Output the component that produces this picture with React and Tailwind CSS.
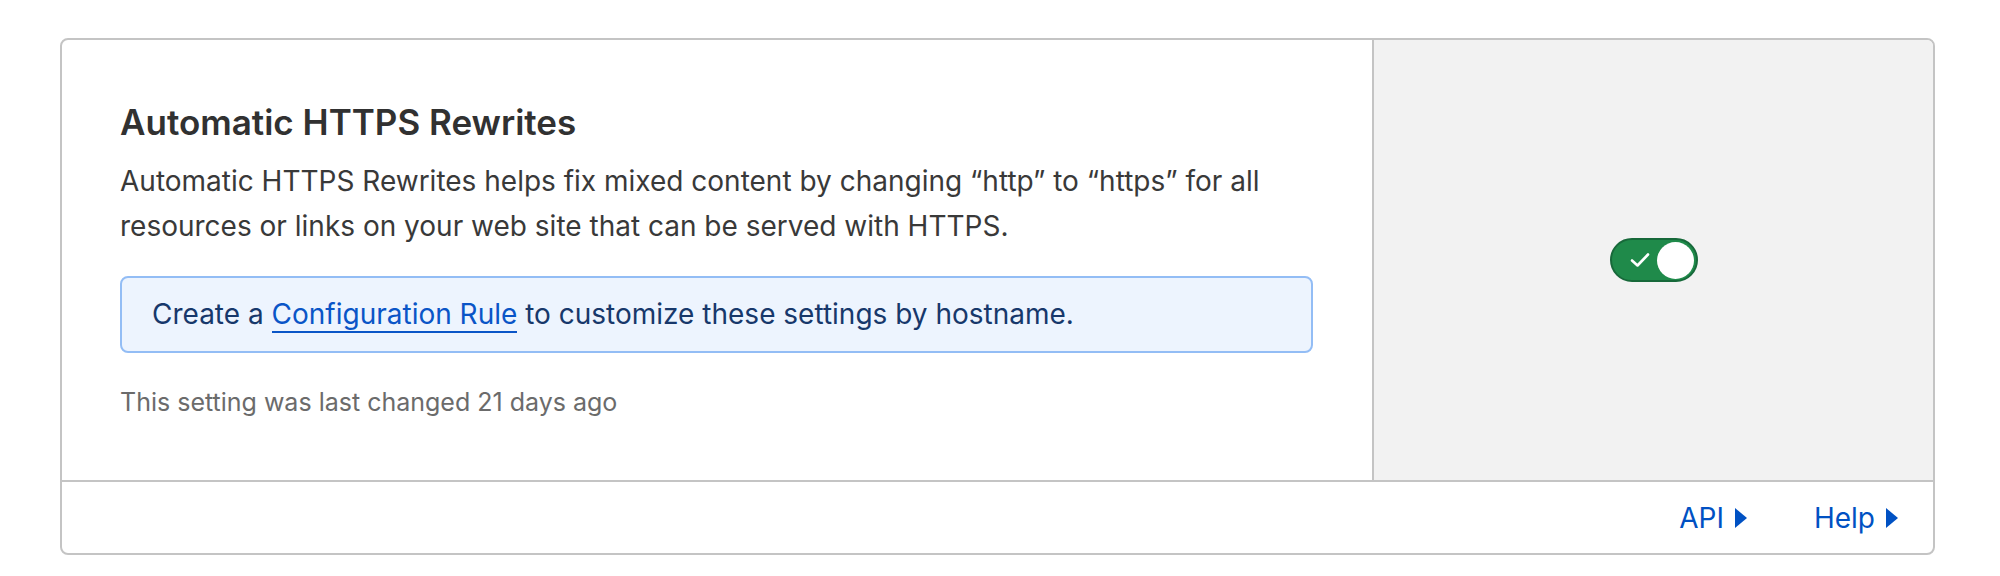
function Toggle() {
  return (
    <div className="flex h-[44px] w-[88px] items-center justify-between rounded-full border-2 border-[#17693a] bg-[#1f8a4a] pl-[18px] pr-[2px]">
      <svg width="20" height="16" viewBox="0 0 20 16" fill="none">
        <path d="M2 8.5 L7.5 13.5 L18 2.5" stroke="white" strokeWidth="2.6" strokeLinecap="round" strokeLinejoin="round" />
      </svg>
      <div className="h-[37px] w-[37px] rounded-full bg-white" />
    </div>
  );
}

function FooterLink({ label }) {
  return (
    <a href="#" className="flex items-center gap-[10px] text-[28px] text-[#0051c3]">
      {label}
      <svg width="14" height="22" viewBox="0 0 14 22">
        <path d="M1 1 L13 11 L1 21 Z" fill="#0051c3" />
      </svg>
    </a>
  );
}

export default function App() {
  return (
    <div className="min-h-[576px] bg-white pl-[60px] pt-[38px]" style={{ fontFamily: 'Inter, "Noto Sans", sans-serif' }}>
      <div className="flex w-[1875px] flex-col overflow-hidden rounded-[8px] border-2 border-[#c4c4c4]">
        <div className="flex h-[440px]">
          <div className="w-[1310px] pl-[58px] pr-[40px] pt-[62px]">
            <h2 className="text-[35px] font-semibold leading-[40px] text-[#313131]">Automatic HTTPS Rewrites</h2>
            <p className="mt-[17px] text-[28px] leading-[45px] text-[#393939]">
              Automatic HTTPS Rewrites helps fix mixed content by changing “http” to “https” for all
              <br />
              resources or links on your web site that can be served with HTTPS.
            </p>
            <div className="mt-[27px] w-[1193px] rounded-[8px] border-2 border-[#93bdf5] bg-[#edf4fe] px-[30px] py-[14px] text-[28px] leading-[45px] text-[#17386b]">
              Create a{' '}
              <a href="#" className="border-b-2 border-[#0a55c7] text-[#0a55c7]">Configuration Rule</a>{' '}
              to customize these settings by hostname.
            </div>
            <p className="mt-[33px] text-[25px] leading-[32px] text-[#6b6b6b]">This setting was last changed 21 days ago</p>
          </div>
          <div className="flex flex-1 items-center justify-center border-l-2 border-[#c4c4c4] bg-[#f2f2f2]">
            <Toggle />
          </div>
        </div>
        <div className="flex h-[73px] items-center justify-end gap-[66px] border-t-2 border-[#c4c4c4] pr-[34px]">
          <FooterLink label="API" />
          <FooterLink label="Help" />
        </div>
      </div>
    </div>
  );
}
